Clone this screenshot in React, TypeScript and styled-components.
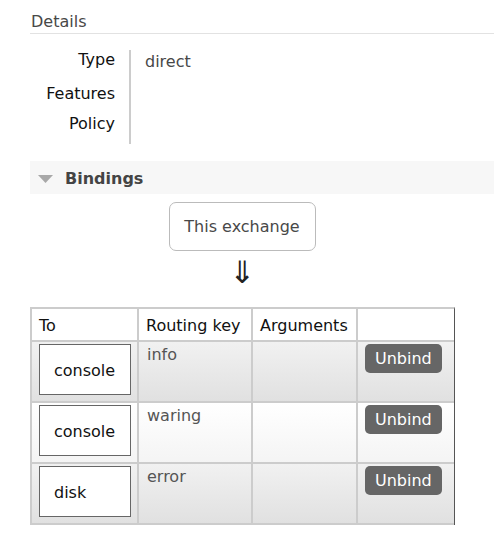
import React from "react";
import styled, { createGlobalStyle } from "styled-components";

const GlobalStyle = createGlobalStyle`
  html, body { margin: 0; padding: 0; background: #fff; }
  body {
    font-family: "DejaVu Sans", Verdana, sans-serif;
    font-size: 16px;
    line-height: 20px;
    color: #333;
  }
`;

const Page = styled.div`
  padding: 12px 0 0 30px;
`;

const SectionTitle = styled.h2`
  margin: 0;
  padding: 0 0 1px 1px;
  font-size: 16px;
  line-height: 20px;
  font-weight: normal;
  color: #484848;
  border-bottom: 1px solid #e2e2e2;
`;

const DetailsTable = styled.table`
  margin-top: 16px;
  border-collapse: separate;
  border-spacing: 0;
`;

const DetailLabel = styled.th`
  box-sizing: border-box;
  width: 101px;
  padding: 0 14px 10px 0;
  text-align: right;
  vertical-align: top;
  font-weight: normal;
  color: #111;
  border-right: 2px solid #ccc;
`;

const DetailValue = styled.td`
  padding: 2px 14px 12px;
  vertical-align: top;
  color: #484848;
`;

const SectionBar = styled.div`
  margin-top: 17px;
  display: flex;
  align-items: center;
  gap: 12px;
  padding: 8px 0 5px 8px;
  background: #f7f7f7;
`;

const BarTitle = styled.h2`
  margin: 0;
  font-size: 16px;
  line-height: 20px;
  font-weight: bold;
  color: #444;
`;

const Diagram = styled.div`
  width: 425px;
  margin-top: 8px;
  display: flex;
  flex-direction: column;
  align-items: center;
`;

const ExchangeBox = styled.div`
  border: 1px solid #bbb;
  border-radius: 7px;
  padding: 14px 15px 13px 14px;
  color: #484848;
`;

const Arrow = styled.div`
  font-size: 31px;
  line-height: 36px;
  margin-top: 3px;
  color: #222;
`;

const BindingTable = styled.table`
  align-self: stretch;
  margin-top: 17px;
  width: 425px;
  table-layout: fixed;
  border-collapse: separate;
  border-spacing: 0;
  border-top: 2px solid #ccc;
  border-left: 2px solid #ccc;
  border-right: 1px solid #555;
`;

const HeadCell = styled.th<{ $w: number; $last?: boolean }>`
  box-sizing: border-box;
  width: ${(p) => p.$w}px;
  padding: 7px 7px 4px;
  text-align: left;
  font-weight: normal;
  color: #111;
  background: #fff;
  border-bottom: 2px solid #ccc;
  border-right: ${(p) => (p.$last ? "none" : "2px solid #ccc")};
`;

const Row = styled.tr<{ $alt: boolean }>`
  background: ${(p) =>
    p.$alt
      ? "linear-gradient(to bottom, #f1f1f1, #e0e0e0)"
      : "linear-gradient(to bottom, #ffffff, #f4f4f4)"};
`;

const Cell = styled.td<{ $last?: boolean }>`
  vertical-align: top;
  padding: 3px 8px 6px;
  color: #555;
  border-bottom: 2px solid #ccc;
  border-right: ${(p) => (p.$last ? "none" : "2px solid #ccc")};
`;

const EndpointCell = styled(Cell)`
  padding: 2px 7px 6px;
`;

const ActionCell = styled(Cell)`
  padding: 2px 7px 6px;
`;

const Endpoint = styled.span`
  display: block;
  box-sizing: border-box;
  width: 92px;
  padding: 16px 0 13px 14px;
  border: 1px solid #666;
  background: #fff;
  color: #111;
`;

const UnbindButton = styled.button`
  font-family: "DejaVu Sans", Verdana, sans-serif;
  font-size: 16px;
  line-height: 20px;
  padding: 5px 10px 4px;
  border: none;
  border-radius: 5px;
  background: #666;
  color: #fff;
  cursor: pointer;
`;

const Toggle = () => (
  <svg width="15" height="8" viewBox="0 0 15 8" aria-hidden>
    <polygon points="0,0 15,0 7.5,8" fill="#a8a8a8" />
  </svg>
);

const bindings = [
  { to: "console", key: "info" },
  { to: "console", key: "waring" },
  { to: "disk", key: "error" },
];

export default function App() {
  return (
    <>
      <GlobalStyle />
      <Page>
        <SectionTitle>Details</SectionTitle>
        <DetailsTable>
          <tbody>
            <tr>
              <DetailLabel>Type</DetailLabel>
              <DetailValue>direct</DetailValue>
            </tr>
            <tr>
              <DetailLabel>Features</DetailLabel>
              <DetailValue />
            </tr>
            <tr>
              <DetailLabel>Policy</DetailLabel>
              <DetailValue />
            </tr>
          </tbody>
        </DetailsTable>

        <SectionBar>
          <Toggle />
          <BarTitle>Bindings</BarTitle>
        </SectionBar>

        <Diagram>
          <ExchangeBox>This exchange</ExchangeBox>
          <Arrow>⇓</Arrow>
          <BindingTable>
            <thead>
              <tr>
                <HeadCell $w={107}>To</HeadCell>
                <HeadCell $w={114}>Routing key</HeadCell>
                <HeadCell $w={105}>Arguments</HeadCell>
                <HeadCell $w={96} $last />
              </tr>
            </thead>
            <tbody>
              {bindings.map((b, i) => (
                <Row key={i} $alt={i % 2 === 0}>
                  <EndpointCell>
                    <Endpoint>{b.to}</Endpoint>
                  </EndpointCell>
                  <Cell>{b.key}</Cell>
                  <Cell />
                  <ActionCell $last>
                    <UnbindButton>Unbind</UnbindButton>
                  </ActionCell>
                </Row>
              ))}
            </tbody>
          </BindingTable>
        </Diagram>
      </Page>
    </>
  );
}
